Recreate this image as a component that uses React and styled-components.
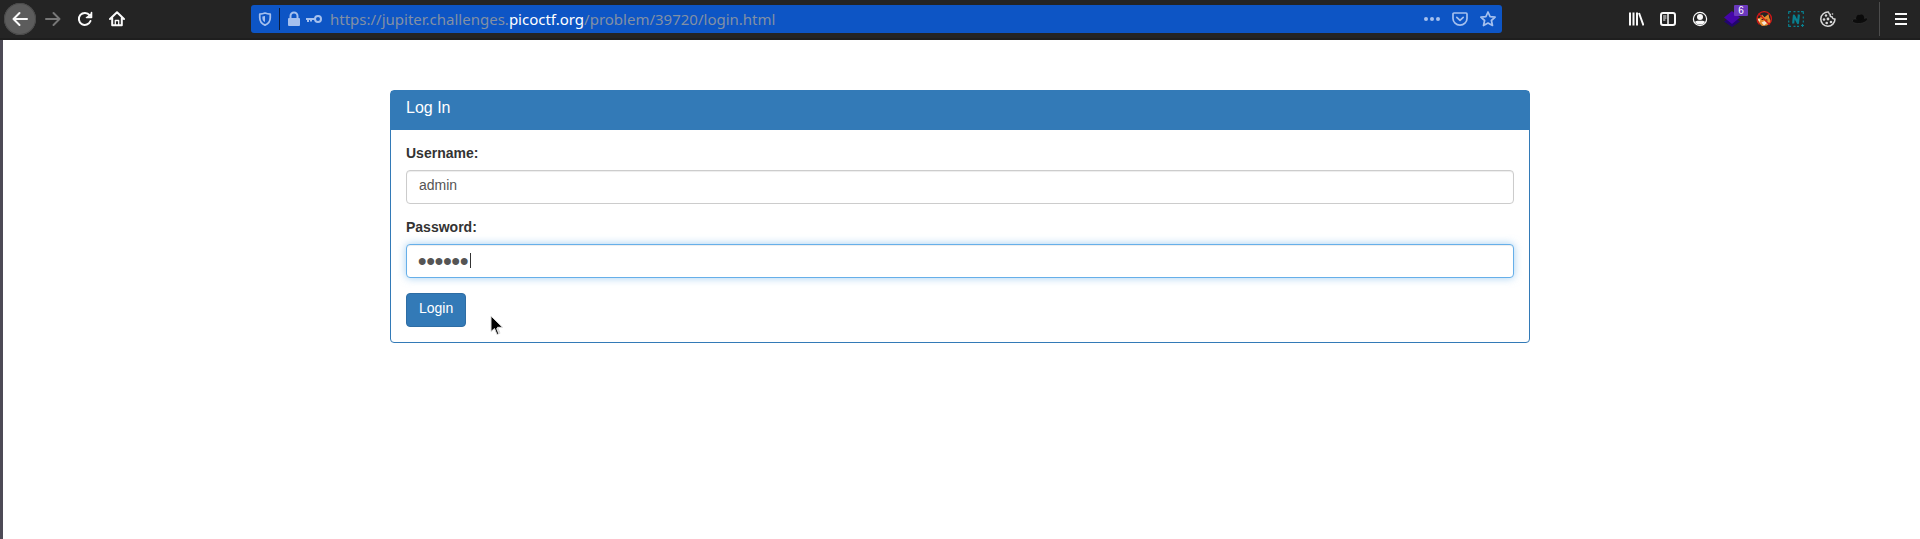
import React from "react";
import styled, { createGlobalStyle } from "styled-components";

const GlobalStyle = createGlobalStyle`
  *, *::before, *::after { box-sizing: border-box; }
  html, body, #root { height: 100%; }
  body { margin: 0; background: #fff; }
  #root { display: flex; flex-direction: column; }
`;

const Toolbar = styled.header`
  display: flex;
  align-items: center;
  height: 40px;
  padding: 0 3px 0 4px;
  background: #242424;
  border-bottom: 2px solid #1e1e1e;
  font-family: "Noto Sans", sans-serif;
`;

const Group = styled.div`
  display: flex;
  align-items: center;
`;

const Spring = styled.div`
  flex: 0 1 118px;
`;

const ToolButton = styled.button`
  position: relative;
  display: flex;
  align-items: center;
  justify-content: center;
  width: ${(p) => p.$width || 32}px;
  height: 32px;
  margin: 0 ${(p) => (p.$raised ? 1 : 0)}px 0 0;
  padding: 0;
  border: 0;
  border-radius: 50%;
  background: ${(p) => (p.$raised ? "#5c5c5c" : "transparent")};
  box-shadow: ${(p) => (p.$raised ? "inset 0 0 0 1px #4a4a4a" : "none")};
  color: ${(p) => p.$color || "#fafafa"};
`;

const Badge = styled.span`
  position: absolute;
  top: 2px;
  left: 18px;
  width: 14px;
  height: 11px;
  border-radius: 1px;
  background: #6a38bc;
  color: #fff;
  font-size: 10px;
  line-height: 11px;
  text-align: center;
`;

const Separator = styled.div`
  width: 1px;
  height: 34px;
  margin: 0 5px 0 3px;
  background: #4c4c4c;
`;

const AddressBar = styled.div`
  display: flex;
  flex: 1 1 auto;
  align-items: center;
  min-width: 0;
  height: 28px;
  border-radius: 3px;
  background: #0d55c5;
`;

const AddressDivider = styled.div`
  width: 1px;
  height: 22px;
  background: #0b1c3c;
`;

const SiteIdentity = styled.div`
  display: flex;
  gap: 4px;
  padding: 0 8px 0 6px;
  color: #a5c0ee;
`;

const Address = styled.div`
  flex: 1 1 auto;
  overflow: hidden;
  color: #8290a4;
  font-size: 15px;
  line-height: 24px;
  white-space: nowrap;
`;

const Domain = styled.span`
  color: #fff;
`;

const Page = styled.main`
  flex: 1 0 auto;
  padding: 50px 15px 20px;
  background: #fff;
  box-shadow: inset 3px 0 #4d4a56;
  color: #333;
  font: 14px/20px "Liberation Sans", sans-serif;
`;

const Panel = styled.section`
  max-width: 1140px;
  margin: 0 auto;
  border: 1px solid #337ab7;
  border-radius: 4px;
`;

const PanelTitle = styled.h3`
  margin: 0;
  padding: 8px 15px 13px;
  background: #337ab7;
  color: #fff;
  font-size: 16px;
  font-weight: 400;
  line-height: 18px;
`;

const Form = styled.form`
  position: relative;
  padding: 15px;
`;

const Field = styled.div`
  position: relative;
  margin-bottom: 15px;
`;

const Label = styled.label`
  display: block;
  padding-bottom: 8px;
  font-weight: 700;
  line-height: 17px;
`;

const TextInput = styled.input`
  display: block;
  width: 100%;
  height: 34px;
  padding: 4px 12px 8px;
  border: 1px solid ${(p) => (p.$active ? "#66afe9" : "#ccc")};
  border-radius: 4px;
  outline: 0;
  background: #fff;
  box-shadow: ${(p) =>
    p.$active
      ? "inset 0 1px 1px rgba(0,0,0,.075), 0 0 8px rgba(102,175,233,.6)"
      : "inset 0 1px 1px rgba(0,0,0,.075)"};
  color: #555;
  font-family: inherit;
  font-size: 14px;

  &[type="password"] {
    padding: 4px 12px 4px 11px;
    font-size: 24px;
    font-weight: 700;
  }
`;

const Caret = styled.span`
  position: absolute;
  bottom: 10px;
  left: 64px;
  width: 1px;
  height: 15px;
  background: #333;
`;

const SubmitButton = styled.button`
  display: block;
  height: 34px;
  padding: 4px 12px 8px;
  border: 1px solid #2e6da4;
  border-radius: 4px;
  background: #337ab7;
  color: #fff;
  font: inherit;
`;

const Pointer = styled.svg`
  position: absolute;
  bottom: 6px;
  left: 99px;
`;

function Icon({ size = 16, children, ...rest }) {
  return (
    <svg
      width={size}
      height={size}
      viewBox="0 0 16 16"
      fill="none"
      stroke="currentColor"
      strokeWidth="2"
      strokeLinecap="round"
      strokeLinejoin="round"
      aria-hidden="true"
      {...rest}
    >
      {children}
    </svg>
  );
}

const BackIcon = () => <Icon><path d="M15 8H1.5M7.5 2L1.5 8l6 6" /></Icon>;
const ForwardIcon = () => <Icon><path d="M1 8h13.5M8.500 2l6 6-6 6" /></Icon>;
const ReloadIcon = () => (
  <Icon>
    <path d="M12.600 4.200A6 6 0 1 0 13.500 10" />
    <path d="M14.500 1.500v5h-5M14 6L10.500 6 14 3z" strokeWidth="1.600" />
  </Icon>
);
const HomeIcon = () => (
  <Icon>
    <path d="M1 8L8 1.300 15 8M3.200 7v7.200h9.600V7" />
    <path d="M6.300 14V9.500h3.400V14" strokeWidth="1.300" />
  </Icon>
);
const ShieldIcon = () => (
  <Icon size={14}>
    <path d="M8 1.200C6 2 4 2.400 2 2.500v4C2 11 4.500 13.500 8 15c3.500-1.500 6-4 6-8.500v-4C12 2.400 10 2 8 1.200z" />
    <path d="M8 4.500v7C6 10.500 5 9 5 6.500V5z" fill="currentColor" stroke="none" />
  </Icon>
);
const LockIcon = () => (
  <Icon>
    <rect x="2" y="7" width="12" height="8" rx="1" fill="currentColor" stroke="none" />
    <path d="M4.500 8V5a3.500 3.500 0 0 1 7 0v3" />
  </Icon>
);
const KeyIcon = () => (
  <Icon strokeLinecap="butt">
    <circle cx="12" cy="8" r="3" />
    <path d="M9 8H0M2 8v3M5 8v2.500" />
  </Icon>
);
const DotsIcon = () => (
  <Icon fill="currentColor" stroke="none">
    <circle cx="2" cy="8" r="2" /><circle cx="8" cy="8" r="2" /><circle cx="14" cy="8" r="2" />
  </Icon>
);
const PocketIcon = () => (
  <Icon strokeWidth="1.700">
    <path d="M2 2h12a1 1 0 0 1 1 1v4.500a7 6.700 0 0 1-14 0V3a1 1 0 0 1 1-1z" />
    <path d="M4.800 6.300L8 9.300l3.200-3" />
  </Icon>
);
const StarIcon = () => (
  <Icon strokeWidth="1.700">
    <path d="M8 1l2.100 4.600 5 .5-3.700 3.400 1.100 5L8 12l-4.500 2.500 1.100-5L.9 6.100l5-.5z" />
  </Icon>
);
const LibraryIcon = () => (
  <Icon strokeLinecap="butt"><path d="M2 1.500v13M5.500 1.500v13M9 1.500v13M11 2l4.500 12.500" /></Icon>
);
const SidebarIcon = () => (
  <Icon>
    <rect x="1" y="2" width="14" height="12" rx="2" />
    <path d="M8 2v12" strokeWidth="1.500" />
    <path d="M3.500 5h2.500M3.500 7h2.500M3.500 9h1.500" strokeWidth="1" />
  </Icon>
);
const AccountIcon = () => (
  <Icon>
    <circle cx="8" cy="8" r="6.600" strokeWidth="1.200" />
    <circle cx="8" cy="6" r="3" fill="currentColor" stroke="none" />
    <path d="M3 11c1-1.200 2-1.200 3-1.200h4c1 0 2 0 3 1.200-1 2-3 2.600-5 2.600S4 13 3 11z" fill="currentColor" stroke="none" />
  </Icon>
);
const LayersIcon = () => (
  <Icon stroke="none">
    <path d="M0 10.500L8 5l8 5.500L8 16z" fill="#22056f" />
    <path d="M0 6.500L8 0l8 6.500L8 13z" fill="#4505a8" />
  </Icon>
);
const FoxIcon = () => (
  <Icon>
    <path d="M1 7.500l3-.8 2-3.200 2.500 2.700L12.500 3l.8 4 2 4-4.300 3.500-5 .5L3 12z" fill="#e58a2c" stroke="none" />
    <path d="M1.500 7.800l3 .7-1 2.500zM5.500 11.500l3-1.500 2.500 2-3 2.500z" fill="#f5e6d0" stroke="none" />
    <path d="M6 8.500h1M10 9h1" stroke="#33251c" strokeWidth="1.200" />
    <path d="M3.200 13A7.200 7.200 0 1 1 13 13.200" stroke="#cf1717" strokeWidth="1.300" />
    <path d="M3 3l10 10" stroke="#cf1717" strokeWidth="1.300" />
  </Icon>
);
const FrameIcon = () => (
  <Icon stroke="#087f8e" strokeLinecap="butt">
    <path d="M.7 3V.7H3M5.500.7h2M9.500.7h2M13 .7h2.300V3M15.300 5.500v2M15.300 9.500v2M.7 5.500v2M.7 9.500v2M.7 13v2.300H3M5.500 15.300h2M9 15.300h2M14.500 13v3M13 14.500h3" strokeWidth="1.200" />
    <path d="M5.200 12.500l.7-8 4 7.500 1-8.500" strokeWidth="2.200" />
  </Icon>
);
const CookieIcon = () => (
  <Icon>
    <path d="M8.500 1A7.100 7.100 0 1 0 15 8c-1.500.3-2.700-.4-2.700-2-1.800 0-2.500-1-2-2.500C9.300 3.200 8.700 2.300 8.500 1z" stroke="#d7d7d7" strokeWidth="1.500" />
    <g fill="#d7d7d7" stroke="none">
      <circle cx="6" cy="4.500" r="1.200" /><circle cx="4" cy="8.500" r="1.300" /><circle cx="8" cy="8" r="1.400" />
      <circle cx="6.700" cy="12" r="1.300" /><circle cx="11" cy="11" r="1.300" /><circle cx="12.500" cy="3" r=".8" />
    </g>
  </Icon>
);
const HatIcon = () => (
  <Icon stroke="none">
    <path d="M.3 9.800c0-1.600 1.700-2 3.700-1.800l8-.5c2-.7 3.700-.5 3.700.5 0 1.800-4 4.500-8.700 4.500-4 0-6.700-.9-6.700-2.700z" fill="#0c0c0c" stroke="#3b3b3b" strokeWidth=".5" />
    <path d="M4 8c.2-2 1-4 2.300-4.200 1 .4 2 .2 3-.2C11 3.400 12 5 12.300 7.500 10 9.500 6.500 9.800 4 8z" fill="#0a0a0a" />
  </Icon>
);
const MenuIcon = () => (
  <Icon strokeLinecap="butt"><path d="M2 3h12M2 8h12M2 13h12" /></Icon>
);

function BrowserToolbar() {
  const tint = "#a5c0ee";
  return (
    <Toolbar>
      <Group>
        <ToolButton $raised aria-label="Back"><BackIcon /></ToolButton>
        <ToolButton $color="#777" aria-label="Forward"><ForwardIcon /></ToolButton>
        <ToolButton aria-label="Reload"><ReloadIcon /></ToolButton>
        <ToolButton aria-label="Home"><HomeIcon /></ToolButton>
      </Group>
      <Spring />
      <AddressBar>
        <ToolButton $width={28} $color={tint} aria-label="Tracking protection"><ShieldIcon /></ToolButton>
        <AddressDivider />
        <SiteIdentity><LockIcon /><KeyIcon /></SiteIdentity>
        <Address>
          https://jupiter.challenges.<Domain>picoctf.org</Domain>/problem/39720/login.html
        </Address>
        <ToolButton $width={28} $color={tint} aria-label="Page actions"><DotsIcon /></ToolButton>
        <ToolButton $width={28} $color={tint} aria-label="Save to Pocket"><PocketIcon /></ToolButton>
        <ToolButton $width={28} $color={tint} aria-label="Bookmark"><StarIcon /></ToolButton>
      </AddressBar>
      <Spring />
      <Group>
        <ToolButton aria-label="Library"><LibraryIcon /></ToolButton>
        <ToolButton aria-label="Sidebars"><SidebarIcon /></ToolButton>
        <ToolButton aria-label="Account"><AccountIcon /></ToolButton>
        <ToolButton aria-label="Layers"><LayersIcon /><Badge>6</Badge></ToolButton>
        <ToolButton aria-label="Proxy"><FoxIcon /></ToolButton>
        <ToolButton aria-label="Screenshot"><FrameIcon /></ToolButton>
        <ToolButton aria-label="Cookies"><CookieIcon /></ToolButton>
        <ToolButton aria-label="Hat"><HatIcon /></ToolButton>
        <Separator />
        <ToolButton aria-label="Menu"><MenuIcon /></ToolButton>
      </Group>
    </Toolbar>
  );
}

export default function App() {
  return (
    <>
      <GlobalStyle />
      <BrowserToolbar />
      <Page>
        <Panel>
          <PanelTitle>Log In</PanelTitle>
          <Form onSubmit={(e) => e.preventDefault()}>
            <Field>
              <Label htmlFor="username">Username:</Label>
              <TextInput id="username" type="text" defaultValue="admin" />
            </Field>
            <Field>
              <Label htmlFor="password">Password:</Label>
              <TextInput id="password" type="password" defaultValue="secret" $active />
              <Caret />
            </Field>
            <SubmitButton type="submit">Login</SubmitButton>
            <Pointer width="14" height="21" viewBox="0 0 14 21" aria-hidden="true">
              <path d="M1 1v15.500l3.500-3 2.500 6 3-1.200-2.500-6H12.500z" fill="#000" stroke="#ddd" />
              <path d="M7 13l2.300 5.500" stroke="#ddd" strokeWidth="2" />
            </Pointer>
          </Form>
        </Panel>
      </Page>
    </>
  );
}
